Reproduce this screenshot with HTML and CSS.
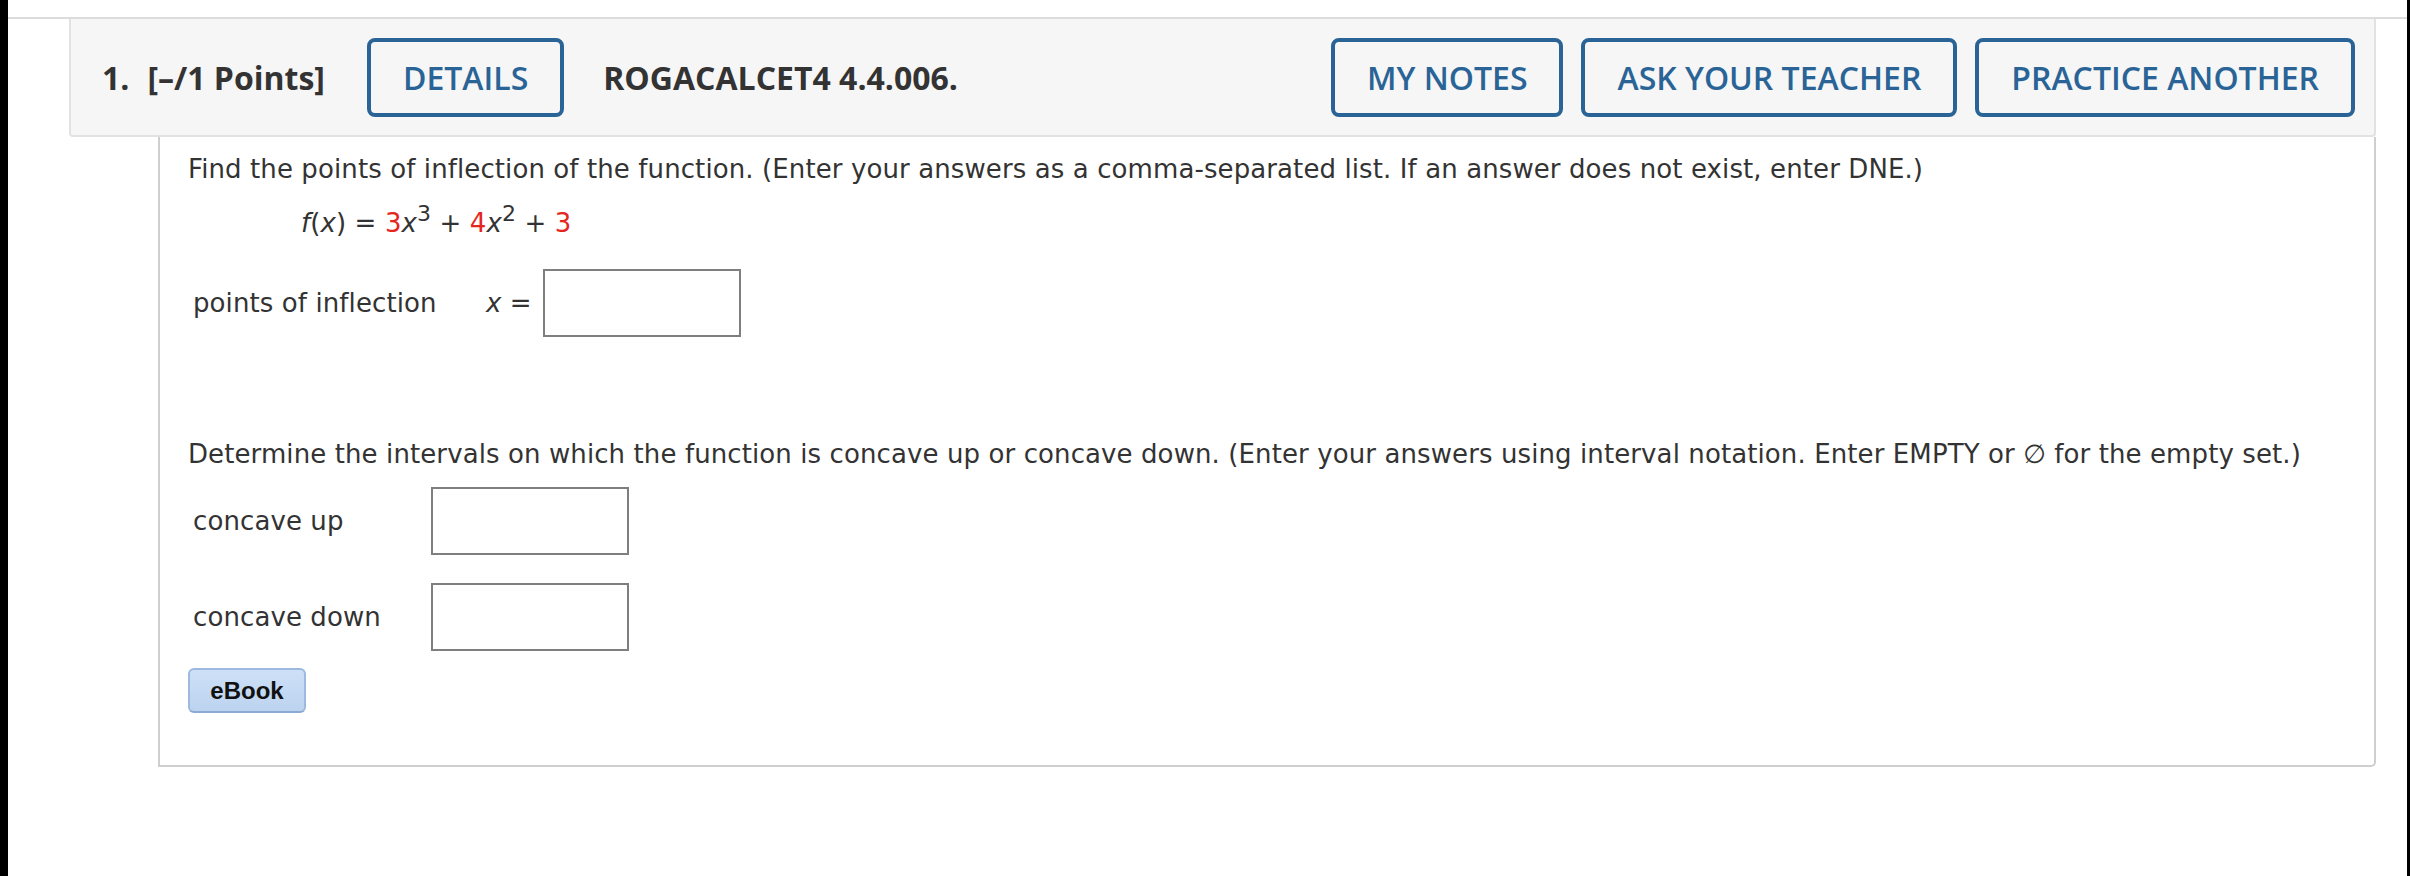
FILE: index.html
```html
<!DOCTYPE html>
<html>
<head>
<meta charset="utf-8">
<link rel="stylesheet" href="styles.css">
</head>
<body>
<div class="frame">
  <div class="rule"></div>
  <div class="question">
    <div class="q-header">
      <span class="q-num">1.</span>
      <span class="q-points">[–/1 Points]</span>
      <button class="hbtn">DETAILS</button>
      <span class="q-title">ROGACALCET4 4.4.006.</span>
      <div class="hbtns">
        <button class="hbtn">MY NOTES</button>
        <button class="hbtn">ASK YOUR TEACHER</button>
        <button class="hbtn">PRACTICE ANOTHER</button>
      </div>
    </div>
    <div class="q-body">
      <p class="prompt">Find the points of inflection of the function. (Enter your answers as a comma-separated list. If an answer does not exist, enter DNE.)</p>
      <div class="eq"><i>f</i>(<i>x</i>) = <span class="red">3</span><i>x</i><sup>3</sup> + <span class="red">4</span><i>x</i><sup>2</sup> + <span class="red">3</span></div>
      <div class="row row-first">
        <span class="label label-wide">points of inflection</span>
        <span class="xeq"><i>x</i> =</span>
        <input class="ans" type="text">
      </div>
      <p class="prompt prompt-second">Determine the intervals on which the function is concave up or concave down. (Enter your answers using interval notation. Enter EMPTY or ∅ for the empty set.)</p>
      <div class="row row-up">
        <span class="label">concave up</span>
        <input class="ans" type="text">
      </div>
      <div class="row row-down">
        <span class="label">concave down</span>
        <input class="ans" type="text">
      </div>
      <button class="ebook">eBook</button>
    </div>
  </div>
</div>
</body>
</html>
```
FILE: styles.css
```css
html, body {
  margin: 0;
  padding: 0;
  background: #fff;
}
body {
  font-family: "DejaVu Sans", Verdana, sans-serif;
  color: #333;
}
.frame {
  box-sizing: border-box;
  min-height: 876px;
  border-left: 8px solid #000;
  border-right: 3px solid #000;
  padding-top: 17px;
}
.rule {
  height: 2px;
  background: #dcdcdc;
}
.question {
  margin: 0 31px 0 61px;
}
.q-header {
  display: flex;
  align-items: center;
  background: #f6f6f6;
  border: 2px solid #e2e2e2;
  border-top: 0;
  border-radius: 0 0 4px 4px;
  padding: 19px 19px 18px 31px;
  font-family: "Open Sans", "Liberation Sans", sans-serif;
  color: #333;
}
.q-num {
  font-weight: 700;
  font-size: 32px;
  margin-right: 18px;
}
.q-points {
  font-weight: 700;
  font-size: 32px;
  margin-right: 42px;
}
.q-title {
  font-weight: 700;
  font-size: 32px;
  margin-left: 39px;
}
.hbtns {
  margin-left: auto;
  display: flex;
  gap: 18px;
}
.hbtn {
  font-family: "Open Sans", "Liberation Sans", sans-serif;
  font-weight: 600;
  font-size: 32px;
  color: #2a6496;
  background: transparent;
  border: 4px solid #2a6496;
  border-radius: 8px;
  height: 79px;
  padding: 0 32px;
  box-sizing: border-box;
}
.q-body {
  margin-left: 89px;
  border: 2px solid #cfcfcf;
  border-top: 0;
  border-radius: 0 0 5px 0;
  padding: 14px 28px 52px 28px;
  font-size: 26px;
  line-height: 36px;
  letter-spacing: 0.1px;
}
.prompt {
  margin: 0;
}
.eq {
  margin: 18px 0 0 113px;
  height: 36px;
}
.eq sup {
  font-size: 22px;
  line-height: 0;
  vertical-align: 11px;
}
.red {
  color: #e5261d;
}
.row {
  display: flex;
  align-items: center;
  height: 68px;
}
.row-first {
  margin-top: 28px;
}
.label {
  box-sizing: border-box;
  width: 243px;
  padding-left: 5px;
}
.label-wide {
  width: 298px;
}
.xeq {
  margin-right: 11px;
}
.ans {
  width: 198px;
  height: 68px;
  box-sizing: border-box;
  border: 2px solid #7f7f7f;
  background: #fff;
  margin: 0;
  padding: 0;
}
.prompt-second {
  margin-top: 99px;
}
.row-up {
  margin-top: 15px;
}
.row-down {
  margin-top: 28px;
}
.ebook {
  display: block;
  margin-top: 17px;
  width: 118px;
  height: 45px;
  box-sizing: border-box;
  border: 2px solid #9db9df;
  border-bottom-color: #8aa9d3;
  border-radius: 6px;
  background: linear-gradient(#cde0f7, #bcd3ef);
  font-family: "Liberation Sans", Arial, sans-serif;
  font-weight: 700;
  font-size: 24px;
  letter-spacing: 0;
  color: #111;
  padding: 0;
}
```
